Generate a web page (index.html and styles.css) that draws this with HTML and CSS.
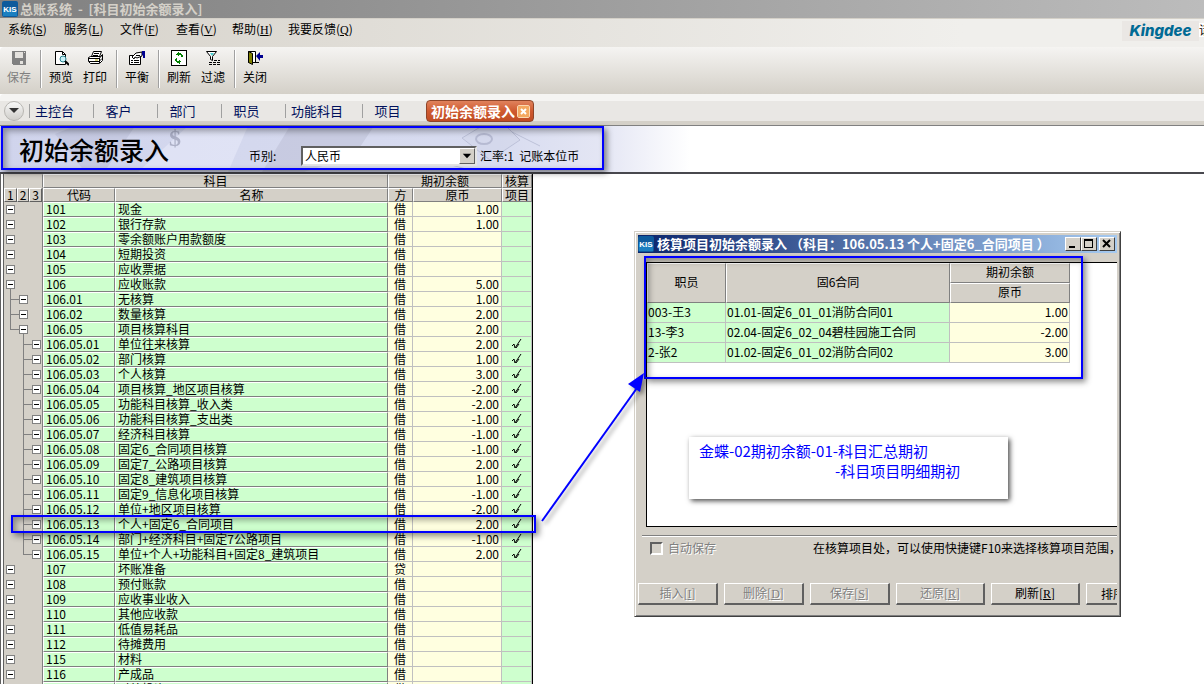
FILE: index.html
```html
<!DOCTYPE html>
<html lang="zh-CN">
<head>
<meta charset="utf-8">
<title>总账系统 - [科目初始余额录入]</title>
<link rel="stylesheet" href="styles.css">
</head>
<body>
<div class="app">
  <header class="titlebar">
    <svg class="kis" viewBox="0 0 16 16" aria-hidden="true"><rect width="16" height="16" rx="2" fill="#0d5a9c"/><rect x="1" y="8" width="14" height="7" fill="#1b7fc0"/><text x="8" y="11" text-anchor="middle" class="kis-text">KIS</text></svg>
    <span>总账系统&nbsp; -&nbsp; [科目初始余额录入]</span>
  </header>

  <nav class="menubar">
    <button>系统(<u>S</u>)</button>
    <button>服务(<u>L</u>)</button>
    <button>文件(<u>F</u>)</button>
    <button>查看(<u>V</u>)</button>
    <button>帮助(<u>H</u>)</button>
    <button>我要反馈(<u>Q</u>)</button>
    <span class="brand">Kingdee</span>
    <span class="ticker">请</span>
  </nav>

  <div class="toolbar">
    <button class="tool" disabled>
      <svg viewBox="0 0 16 16" shape-rendering="crispEdges"><path fill="#808080" d="M1 1h14v14H2l-1-1z"/><path fill="#e4e2de" d="M4 2h8v6H4zM13 2h1v1h-1zM9 11h3v3H9z"/></svg>
      保存
    </button>
    <span class="divider"></span>
    <button class="tool">
      <svg viewBox="0 0 16 16"><path fill="#fff" stroke="#000" d="M2.500 1.500h7l3 3v10h-10z"/><path fill="none" stroke="#000" d="M9.500 1.500v3h3"/><circle cx="10" cy="9" r="3" fill="#c8f0f8" stroke="#27828c"/><path stroke="#000" stroke-width="2" d="M12 11l4 4"/></svg>
      预览
    </button>
    <button class="tool">
      <svg viewBox="0 0 16 16"><path fill="#fff" stroke="#000" d="M4.500 6.500l2-5h8l-2 5zM1.500 7.500l2-1h10l2-2v6l-3 3h-9l-2-2z"/><path fill="none" stroke="#000" d="M7 3.500h5M6 5.500h5M2 8.500h10l3-3M2 11.500h10l3-3M12.500 8v5M4 13.500h8"/><path stroke="#b8b000" d="M8 10h3"/></svg>
      打印
    </button>
    <span class="divider"></span>
    <button class="tool">
      <svg viewBox="0 0 16 16"><path fill="#fff" stroke="#000" d="M.500 5.500h11v9h-11z"/><path fill="#fff" stroke="#000" d="M3 7l4-4 6-1v4l-5 2-2-1-1 2z"/><path stroke="#000" d="M2 10.500h2M5 10.500h5M2 12.500h2M5 12.500h5M7 5.500h4"/><path fill="#000090" d="M13 1h3v7h-2V5h-1z"/></svg>
      平衡
    </button>
    <span class="divider"></span>
    <button class="tool">
      <svg viewBox="0 0 16 16" shape-rendering="crispEdges"><path fill="#fff" stroke="#000" d="M.500.500h15v15H.500z"/><path fill="#008000" d="M7 2h1v1h2v1h1v3h-1V5H8v1H7V5H6V4H5v1h1V3h1zM5 8h1v3h2v-1h1v1h1v1H9v2H8v-1H6v-1H5z"/><path fill="#008000" d="M10 5h2v2h-2zM4 9h2v2H4z"/></svg>
      刷新
    </button>
    <button class="tool">
      <svg viewBox="0 0 16 16"><path fill="#fff" stroke="#000" d="M1.500 1.500h10l-4 5v4l-2-1v-3z"/><path fill="#48d0d0" d="M5 3h4L7 6z"/><path stroke="#000" stroke-dasharray="3 1" d="M9 10.500h6M4 12.500h11M4 14.500h11"/></svg>
      过滤
    </button>
    <span class="divider"></span>
    <button class="tool">
      <svg viewBox="0 0 16 16"><path fill="#fff" stroke="#000" d="M1.500 1.500h7l0 11h-7z"/><path fill="#808000" stroke="#000" d="M1.500 1.500l4 2v11l-4-2z"/><path stroke="#000" d="M8 12.500h4"/><path fill="#000090" d="M9 6l4-4v3h3v3h-3v3z"/></svg>
      关闭
    </button>
  </div>

  <nav class="tabs">
    <button class="tab-menu" aria-label="导航"><svg viewBox="0 0 10 6"><path d="M0 0h10L5 5z" fill="#333"/></svg></button>
    <a class="tab" href="#">主控台</a>
    <a class="tab" href="#">客户</a>
    <a class="tab" href="#">部门</a>
    <a class="tab" href="#">职员</a>
    <a class="tab" href="#">功能科目</a>
    <a class="tab" href="#">项目</a>
    <div class="tab-active"><span>初始余额录入</span><button aria-label="关闭标签"><svg viewBox="0 0 11 11"><path d="M3 3l5 5M8 3l-5 5" stroke="#fff" stroke-width="2"/></svg></button></div>
  </nav>

  <section class="banner">
    <svg class="art" viewBox="0 0 680 46" preserveAspectRatio="xMinYMin slice" aria-hidden="true">
      <path d="M55 8l20-8h60l-28 42H82z" fill="#b9bed8" opacity=".5"/>
      <path d="M262 46L290 0h84l-20 30-50 16z" fill="#b3b7ce" opacity=".4"/>
      <path d="M188 0h60l-20 46h-90z" fill="#eceefb" opacity=".5"/>
      <path d="M462 12l20-12h24l14 14-30 20z" fill="#d3d7ea" stroke="#a9aec8" opacity=".6"/>
      <ellipse cx="484" cy="13" rx="8" ry="5" fill="none" stroke="#a9aec8" stroke-width="2" opacity=".7"/>
      <path d="M512 6l28 14M440 36l30 8" stroke="#a9aec8" opacity=".6"/>
      <text x="169" y="20" class="dollar">$</text>
    </svg>
    <h1>初始余额录入</h1>
    <label for="currency">币别:</label>
    <span class="combo">
      <select id="currency"><option>人民币</option></select>
      <svg viewBox="0 0 15 15" aria-hidden="true"><path d="M3 5h9l-4.500 5z" fill="#000"/></svg>
    </span>
    <span class="rate">汇率:1&nbsp; 记账本位币</span>
  </section>

  <main class="workspace">
    <table class="ledger">
      <colgroup><col class="c-tree"><col class="c-code"><col class="c-name"><col class="c-dir"><col class="c-amt"><col class="c-item"></colgroup>
      <thead>
        <tr><th class="corner"></th><th colspan="2">科目</th><th colspan="2">期初余额</th><th>核算</th></tr>
        <tr><th class="levels"><div><button>1</button><button>2</button><button>3</button></div></th><th>代码</th><th>名称</th><th>方</th><th>原币</th><th>项目</th></tr>
      </thead>
      <tbody id="ledger-rows"></tbody>
    </table>
  </main>

  <section class="dialog" role="dialog" aria-labelledby="dialog-title">
    <header class="dialog-title">
      <svg class="kis" viewBox="0 0 16 16" aria-hidden="true"><rect width="16" height="16" rx="2" fill="#0d5a9c"/><rect x="1" y="8" width="14" height="7" fill="#1b7fc0"/><text x="8" y="11" text-anchor="middle" class="kis-text">KIS</text></svg>
      <h2 id="dialog-title">核算项目初始余额录入 （科目：106.05.13 个人+固定6_合同项目 ）</h2>
      <button class="win" aria-label="最小化"><svg viewBox="0 0 12 10"><path d="M2 7h6v2H2z"/></svg></button>
      <button class="win" aria-label="最大化"><svg viewBox="0 0 12 10"><path fill-rule="evenodd" d="M1 0h9v9H1zM2 2v6h7V2z"/></svg></button>
      <button class="win win-close" aria-label="关闭"><svg viewBox="0 0 12 10"><path d="M2 1l7 7M9 1L2 8" stroke="#000" stroke-width="2"/></svg></button>
    </header>
    <div class="pane">
      <table class="detail">
        <colgroup><col class="d-staff"><col class="d-contract"><col class="d-amt"></colgroup>
        <thead>
          <tr><th rowspan="2">职员</th><th rowspan="2">固6合同</th><th>期初余额</th></tr>
          <tr><th>原币</th></tr>
        </thead>
        <tbody>
          <tr><td>003-王3</td><td>01.01-固定6_01_01消防合同01</td><td>1.00</td></tr>
          <tr><td>13-李3</td><td>02.04-固定6_02_04碧桂园施工合同</td><td>-2.00</td></tr>
          <tr><td>2-张2</td><td>01.02-固定6_01_02消防合同02</td><td>3.00</td></tr>
        </tbody>
      </table>
    </div>
    <div class="options">
      <label><input type="checkbox" disabled>自动保存</label>
      <p>在核算项目处，可以使用快捷键F10来选择核算项目范围，</p>
    </div>
    <div class="actions">
      <button disabled>插入[<u>I</u>]</button>
      <button disabled>删除[<u>D</u>]</button>
      <button disabled>保存[<u>S</u>]</button>
      <button class="wide" disabled>还原[<u>R</u>]</button>
      <button class="wide">刷新[<u>R</u>]</button>
      <button class="sort">排序</button>
    </div>
  </section>

  <div class="mark mark-banner"></div>
  <div class="mark mark-row"></div>
  <div class="mark mark-detail"></div>
  <svg class="arrow" viewBox="0 0 110 154" aria-hidden="true"><path d="M2 149L97 16" stroke="#00f" stroke-width="2"/><path d="M104 1l-4 19-12-8z" fill="#00f"/></svg>
  <div class="note"><p>金蝶-02期初余额-01-科目汇总期初</p><p class="second">-科目项目明细期初</p></div>
</div>
<script src="app.js"></script>
</body>
</html>
```
FILE: styles.css
```css
* { box-sizing: border-box; }

body {
  margin: 0;
  font: 12px/14px "Noto Sans CJK SC", sans-serif;
  color: #000;
  background: #fff;
}

button {
  font: inherit;
  color: inherit;
  margin: 0;
  padding: 0;
  border: 0;
  background: none;
}

u { font-family: "Liberation Serif", "Noto Sans CJK SC", serif; }

.app {
  position: relative;
  display: flex;
  flex-direction: column;
  height: 100vh;
  overflow: hidden;
}

.titlebar {
  flex: none;
  display: flex;
  align-items: center;
  gap: 2px;
  height: 18px;
  padding-left: 2px;
  font-size: 13px;
  font-weight: bold;
  color: #d4d0c8;
  background: linear-gradient(90deg, #808080, #bcbcbc);
}

.kis { flex: none; width: 16px; height: 16px; }
.kis-text { font: bold 8px "Liberation Sans", sans-serif; fill: #fff; }

.menubar {
  flex: none;
  display: flex;
  align-items: flex-start;
  height: 29px;
  padding: 1px 0 0 8px;
  border-top: 1px solid #d4d0c8;
  background: linear-gradient(90deg, #d6d2ca, #f0efec 80%);
}
.menubar button { min-width: 56px; height: 18px; text-align: left; white-space: nowrap; }
.brand {
  width: 77px;
  height: 20px;
  margin: 1px 0 0 auto;
  text-align: center;
  font: italic 800 15px/20px Inter, "Open Sans", sans-serif;
  color: #006a94;
  background: #eae7e4;
}
.ticker { width: 5px; margin-top: 3px; overflow: hidden; background: #fff; }

.toolbar {
  flex: none;
  display: flex;
  height: 47px;
  padding: 3px 0 0 2px;
  border-top-left-radius: 4px;
  background: linear-gradient(#f5f4f2, #d4d0c8);
}
.tool {
  display: flex;
  flex-direction: column;
  align-items: center;
  gap: 4px;
  width: 34px;
  height: 38px;
}
.tool svg { width: 16px; height: 16px; }
.tool:disabled { color: #808080; }
.divider {
  width: 2px;
  height: 38px;
  margin: 0 2px 0 4px;
  border-left: 1px solid #a0a0a0;
  border-right: 1px solid #fff;
}

.tabs {
  flex: none;
  display: flex;
  align-items: center;
  height: 32px;
  padding: 7px 0 4px 4px;
  border-top-left-radius: 4px;
  border-bottom: 1px solid #808080;
  background: linear-gradient(#f5f4f2 7px, #e9e7e4 7px, #e9e7e4 27px, #d4d0c8 27px);
  font-size: 13px;
}
.tab-menu {
  display: flex;
  align-items: center;
  justify-content: center;
  width: 20px;
  height: 20px;
  margin-right: 5px;
  border: 1px solid #b8b6b2;
  border-radius: 50%;
  background: linear-gradient(#f8f8f8, #cfcdc9);
}
.tab-menu svg { width: 10px; height: 6px; }
.tab {
  min-width: 64px;
  padding: 0 19px 0 5px;
  border-left: 1px solid #a0a0a0;
  text-align: center;
  color: #00105c;
  text-decoration: none;
}
.tab-active {
  display: flex;
  align-items: center;
  gap: 3px;
  height: 22px;
  padding: 0 4px;
  border: 1px solid #8f4428;
  border-radius: 4px;
  color: #fff;
  font-size: 14px;
  font-weight: bold;
  background: linear-gradient(#e0825c, #cf5a30 50%, #c04c24);
}
.tab-active button {
  width: 11px;
  height: 11px;
  border-radius: 1px;
  background: #f4a860;
  outline: 1px solid #fbd8b0;
}
.tab-active svg { display: block; width: 11px; height: 11px; }

.banner {
  flex: none;
  position: relative;
  display: flex;
  align-items: flex-end;
  height: 48px;
  padding: 0 0 9px 19px;
  border-bottom: 2px solid #48484e;
  background: linear-gradient(90deg, #d0d4ec, #d8dcf0 500px, #e4e6f4 604px, #fff 690px);
}
.banner > * { position: relative; }
.banner .art { position: absolute; top: 0; left: 0; width: 680px; height: 46px; }
.dollar { font: bold 24px "Liberation Serif", serif; fill: #8c90a8; opacity: .6; }
.banner h1 {
  width: 230px;
  margin: 0;
  font-size: 25px;
  font-weight: 500;
  line-height: 28px;
}
.banner label { width: 52px; }
.combo { width: 176px; height: 20px; margin-bottom: -3px; }
.combo select {
  width: 100%;
  height: 100%;
  padding: 0 20px 0 2px;
  appearance: none;
  border: 2px solid #606060;
  border-right-color: #e4e4e4;
  border-bottom-color: #e4e4e4;
  border-radius: 0;
  font: inherit;
  color: #000;
  background: #fff;
}
.combo svg {
  position: absolute;
  top: 2px;
  right: 2px;
  width: 16px;
  height: 16px;
  border: 1px solid;
  border-color: #fff #606060 #606060 #fff;
  background: #d4d0c8;
  pointer-events: none;
}
.rate { margin-left: 3px; white-space: nowrap; }

.workspace {
  flex: 1;
  min-height: 0;
  overflow: hidden;
  border-left: 4px double #606060;
}
.ledger {
  table-layout: fixed;
  width: 529px;
  border-collapse: separate;
  border-spacing: 0;
  border-right: 1px solid #000;
  background: #d4d0c8;
}
.c-tree { width: 39px; }
.c-code { width: 72px; }
.c-name { width: 273px; }
.c-dir { width: 25px; }
.c-amt { width: 89px; }
.c-item { width: 30px; }
.ledger th, .ledger td { height: 15px; padding: 0; line-height: 11px; vertical-align: top; white-space: nowrap; }
.ledger th {
  height: 14px;
  line-height: 12px;
  font-weight: normal;
  border: 1px solid;
  border-color: #fff #808080 #808080 #fff;
}
.ledger .corner { border-color: #d4d0c8 #808080 #d4d0c8 #d4d0c8; }
.ledger .levels { border-width: 0 1px 0 0; }
.levels div { display: flex; }
.levels button {
  flex: 1;
  height: 14px;
  line-height: 12px;
  border: 1px solid;
  border-color: #fff #606060 #606060 #fff;
}
.ledger td.tree { border-right: 1px solid #808080; }
.branch { display: flex; align-items: center; height: 15px; }
.branch svg { flex: none; height: 15px; overflow: visible; }
.toggle {
  flex: none;
  display: grid;
  place-items: center;
  width: 9px;
  height: 9px;
  border: 1px solid #808080;
  background: #fff;
}
.toggle::before { content: ""; width: 5px; height: 1px; background: #000; }
.ledger .code, .ledger .name {
  padding-left: 2px;
  border: 1px solid;
  border-color: #fff #808080 #808080 #fff;
  background: #ceffce;
}
.ledger .dir, .ledger .amt { background: #ffffe0; }
.ledger .dir, .ledger .amt, .ledger .item {
  line-height: 13px;
  border: solid #c0c0c0;
  border-width: 0 1px 1px 0;
}
.ledger .dir { text-align: center; }
.ledger .amt { padding-right: 2px; text-align: right; }
.ledger .item { text-align: center; background: #ceffce; }
.item svg { display: block; width: 12px; height: 13px; margin: auto; }

.dialog {
  position: absolute;
  left: 634px;
  top: 231px;
  width: 487px;
  height: 386px;
  padding: 3px 3px 0 2px;
  border: 1px solid;
  border-color: #d4d0c8 #404040 #404040 #d4d0c8;
  box-shadow: inset 1px 1px #fff, inset -1px -1px #808080;
  background: #d4d0c8;
}
.dialog-title {
  display: flex;
  align-items: center;
  height: 18px;
  margin-left: 1px;
  padding: 0 2px 0 0;
  color: #fff;
  background: linear-gradient(90deg, #0a246a, #a6caf0);
}
.dialog-title h2 {
  flex: 1;
  margin: 0 0 0 3px;
  font-size: 13px;
  line-height: 18px;
  white-space: nowrap;
}
.win {
  flex: none;
  width: 16px;
  height: 14px;
  border: 1px solid;
  border-color: #fff #404040 #404040 #fff;
  background: #d4d0c8;
}
.win svg { display: block; width: 12px; height: 10px; margin: auto; }
.win-close { margin-left: 2px; }
.pane {
  height: 265px;
  margin: 9px 0 0 9px;
  border: 1px solid #000;
  border-right: 0;
  background: #fff;
}
.detail {
  table-layout: fixed;
  width: 423px;
  border-collapse: separate;
  border-spacing: 0;
}
.d-staff { width: 79px; }
.d-contract { width: 224px; }
.d-amt { width: 120px; }
.detail th, .detail td { height: 20px; padding: 0 1px 2px; white-space: nowrap; }
.detail th {
  font-weight: normal;
  border: 1px solid;
  border-color: #fff #808080 #808080 #fff;
  background: #d4d0c8;
}
.detail td { border: solid #c0c0c0; border-width: 0 1px 1px 0; background: #ceffce; }
.detail td:last-child { text-align: right; background: #ffffe0; }

.options {
  display: flex;
  align-items: flex-start;
  height: 48px;
  margin: 8px 0 0 5px;
  padding: 5px 0 0 8px;
  border-top: 1px solid #808080;
  box-shadow: inset 0 1px #fff;
  overflow: hidden;
}
.options label {
  display: flex;
  align-items: center;
  gap: 5px;
  flex: none;
  width: 163px;
  color: #808080;
  text-shadow: 1px 1px #fff;
}
.options input {
  appearance: none;
  width: 13px;
  height: 13px;
  margin: 0;
  border: 2px solid;
  border-color: #606060 #fff #fff #606060;
}
.options p { margin: 0; white-space: nowrap; }
.actions {
  display: flex;
  gap: 6px;
  margin-left: 1px;
  overflow: hidden;
}
.actions button {
  flex: none;
  width: 80px;
  height: 22px;
  border: solid;
  border-width: 1px 2px 2px 1px;
  border-color: #fff #606060 #606060 #fff;
}
.actions .wide { width: 89px; }
.actions .sort { padding-left: 14px; text-align: left; }
.actions button:disabled { color: #808080; text-shadow: 1px 1px #fff; }

.mark {
  position: absolute;
  border: 2px solid #00f;
  box-shadow: 3px 3px 6px rgba(0, 0, 0, .45), inset 3px 3px 6px rgba(0, 0, 0, .35);
  pointer-events: none;
}
.mark-banner { left: 1px; top: 126px; width: 603px; height: 44px; }
.mark-row { left: 11px; top: 515px; width: 525px; height: 18px; }
.mark-detail { left: 644px; top: 256px; width: 439px; height: 123px; }
.arrow {
  position: absolute;
  left: 540px;
  top: 372px;
  width: 110px;
  height: 154px;
  filter: drop-shadow(3px 3px 2px rgba(0, 0, 0, .4));
  pointer-events: none;
}
.note {
  position: absolute;
  left: 689px;
  top: 437px;
  width: 319px;
  height: 62px;
  padding: 4px 10px;
  font-size: 15px;
  line-height: 20px;
  color: #00f;
  background: #fff;
  box-shadow: 2px 2px 5px rgba(0, 0, 0, .7);
}
.note p { margin: 0; white-space: nowrap; }
.note .second { padding-left: 136px; }
```
FILE: app.js
```js
const rows = [
  ["101", "现金", "借", "1.00"],
  ["102", "银行存款", "借", "1.00"],
  ["103", "零余额账户用款额度", "借", ""],
  ["104", "短期投资", "借", ""],
  ["105", "应收票据", "借", ""],
  ["106", "应收账款", "借", "5.00"],
  ["106.01", "无核算", "借", "1.00"],
  ["106.02", "数量核算", "借", "2.00"],
  ["106.05", "项目核算科目", "借", "2.00"],
  ["106.05.01", "单位往来核算", "借", "2.00"],
  ["106.05.02", "部门核算", "借", "1.00"],
  ["106.05.03", "个人核算", "借", "3.00"],
  ["106.05.04", "项目核算_地区项目核算", "借", "-2.00"],
  ["106.05.05", "功能科目核算_收入类", "借", "-2.00"],
  ["106.05.06", "功能科目核算_支出类", "借", "-1.00"],
  ["106.05.07", "经济科目核算", "借", "-1.00"],
  ["106.05.08", "固定6_合同项目核算", "借", "-1.00"],
  ["106.05.09", "固定7_公路项目核算", "借", "2.00"],
  ["106.05.10", "固定8_建筑项目核算", "借", "1.00"],
  ["106.05.11", "固定9_信息化项目核算", "借", "-1.00"],
  ["106.05.12", "单位+地区项目核算", "借", "-2.00"],
  ["106.05.13", "个人+固定6_合同项目", "借", "2.00"],
  ["106.05.14", "部门+经济科目+固定7公路项目", "借", "-1.00"],
  ["106.05.15", "单位+个人+功能科目+固定8_建筑项目", "借", "2.00"],
  ["107", "坏账准备", "贷", ""],
  ["108", "预付账款", "借", ""],
  ["109", "应收事业收入", "借", ""],
  ["110", "其他应收款", "借", ""],
  ["111", "低值易耗品", "借", ""],
  ["112", "待摊费用", "借", ""],
  ["115", "材料", "借", ""],
  ["116", "产成品", "借", ""],
  ["117", "对外投资", "借", ""]
];

const levelOf = code => code.split(".").length - 1;

// Connector from the parent's box or the sibling above, one 13px step per level
function connector(level, firstChild) {
  const width = 2 + level * 13;
  const top = firstChild ? -3 : -8;
  const line = level
    ? `<path d="M${width - 8.5} ${top}V7.500M${width - 9} 7.500H${width}" fill="none" stroke="#808080"/>`
    : "";
  return `<svg width="${width}" viewBox="0 0 ${width} 15" aria-hidden="true">${line}</svg>`;
}

const tick = '<svg viewBox="0 0 12 13" role="img" aria-label="是"><path d="M1 9l2-2 1 4L10 2M5 11l3-4" fill="none" stroke="#000"/></svg>';

document.getElementById("ledger-rows").innerHTML = rows.map(([code, name, dir, amount], i) => {
  const level = levelOf(code);
  const firstChild = i > 0 && levelOf(rows[i - 1][0]) < level;
  return `<tr><td class="tree"><div class="branch">${connector(level, firstChild)}<button class="toggle" aria-label="折叠 ${code}"></button></div></td>` +
    `<td class="code">${code}</td><td class="name">${name}</td><td class="dir">${dir}</td>` +
    `<td class="amt">${amount}</td><td class="item">${level === 2 ? tick : ""}</td></tr>`;
}).join("");
```
